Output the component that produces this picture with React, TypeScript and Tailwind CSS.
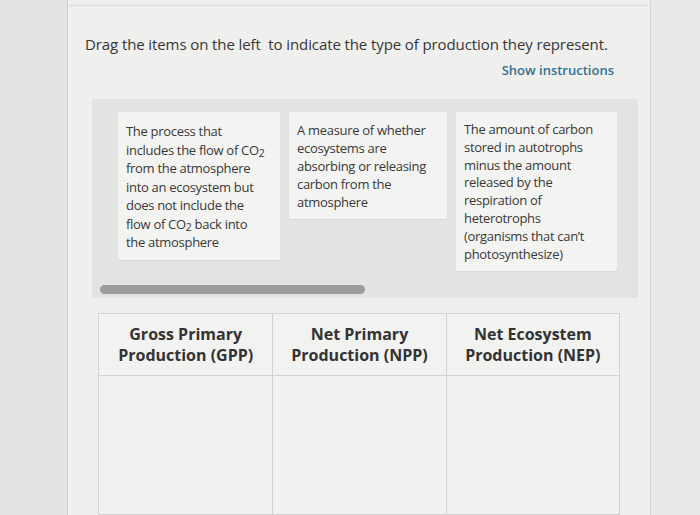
import React from "react";

const Sub2 = () => <sub className="text-[10.5px]">2</sub>;

const cards = [
  {
    key: "gpp-desc",
    box: "w-[162px] leading-[18.5px] pt-[10px]",
    lines: [
      "The process that",
      <>includes the flow of CO<Sub2 /></>,
      "from the atmosphere",
      "into an ecosystem but",
      "does not include the",
      <>flow of CO<Sub2 /> back into</>,
      "the atmosphere",
    ],
  },
  {
    key: "nep-desc",
    box: "w-[158px] leading-[18px] pt-[9px]",
    lines: ["A measure of whether", "ecosystems are", "absorbing or releasing", "carbon from the", "atmosphere"],
  },
  {
    key: "npp-desc",
    box: "w-[161px] leading-[17.8px] pt-[9px]",
    lines: [
      "The amount of carbon",
      "stored in autotrophs",
      "minus the amount",
      "released by the",
      "respiration of",
      "heterotrophs",
      "(organisms that can’t",
      "photosynthesize)",
    ],
  },
];

const columns = [
  ["Gross Primary", "Production (GPP)"],
  ["Net Primary", "Production (NPP)"],
  ["Net Ecosystem", "Production (NEP)"],
];

export default function App() {
  return (
    <div
      className="flex h-[515px] w-[700px] overflow-hidden bg-[#e4e4e2] text-[#333]"
      style={{ fontFamily: '"Open Sans", "Liberation Sans", sans-serif' }}
    >
      <div className="w-[68px] shrink-0 border-r border-[#cfcfcd] bg-[#e3e3e1]" />

      <div className="flex w-[582px] shrink-0 flex-col bg-[#efefed] pt-[5px]">
        <div className="border-t border-[#dcdcda] pl-[17px] pt-[28px]">
          <h1 className="text-[15px] leading-[20px] tracking-[-0.1px] text-[#363636]">
            Drag the items on the left&nbsp; to indicate the type of production they represent.
          </h1>
        </div>

        <div className="flex justify-end pr-[36px] pt-[7px]">
          <span className="text-[13px] font-semibold leading-[18px] text-[#2f7194]">Show instructions</span>
        </div>

        <div className="ml-[24px] mr-[12px] mt-[20px] bg-[#e3e3e1] pb-[4px] pt-[13px]">
          <div className="flex items-start gap-[9px] pl-[26px]">
            {cards.map((c) => (
              <div
                key={c.key}
                className={`${c.box} flex flex-col rounded-[2px] bg-[#f3f3f1] pb-[8px] pl-[8px] text-[13px] tracking-[-0.3px] text-[#383838] shadow-[0_1px_1px_rgba(0,0,0,0.06)]`}
              >
                {c.lines.map((line, i) => (
                  <span key={i} className="whitespace-nowrap">
                    {line}
                  </span>
                ))}
              </div>
            ))}
          </div>
          <div className="ml-[8px] mt-[14px] h-[9px] w-[265px] rounded-full bg-[#9c9c9a]" />
        </div>

        <div className="ml-[30px] mr-[30px] mt-[15px] grid flex-1 grid-cols-3 border border-[#d2d2d0] bg-[#f1f1ef]">
          {columns.map((col, i) => (
            <div key={col[0]} className={`flex flex-col ${i > 0 ? "border-l border-[#d2d2d0]" : ""}`}>
              <div className="flex h-[62px] flex-col items-center justify-center border-b border-[#d2d2d0] bg-[#f2f2f0] text-center text-[16px] font-bold leading-[21px] text-[#333]">
                <span>{col[0]}</span>
                <span>{col[1]}</span>
              </div>
              <div className="flex-1" />
            </div>
          ))}
        </div>
      </div>

      <div className="flex-1 border-l border-[#d6d6d4] bg-[#e8e8e6]" />
    </div>
  );
}
